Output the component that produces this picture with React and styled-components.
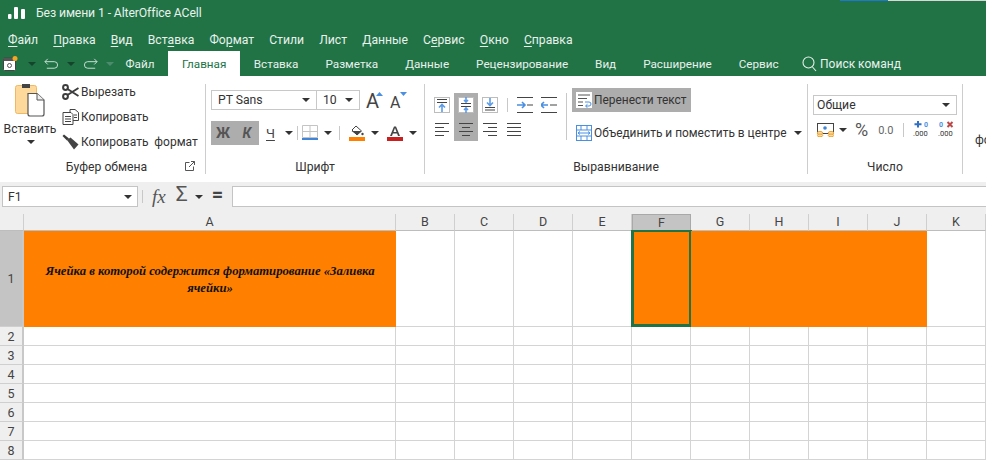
import React from "react";
import styled, { createGlobalStyle } from "styled-components";

const GlobalStyle = createGlobalStyle`
    html, body {
        margin: 0;
        padding: 0;
        background: #fff;
        overflow: hidden;
    }
    * { box-sizing: border-box; }
    svg { flex: none; }
    body {
        font-family: Roboto, "Noto Sans", sans-serif;
        color: #333;
    }
`;

const MENU = [
    ["", "Ф", "айл"], ["", "П", "равка"], ["", "В", "ид"], ["Вст", "а", "вка"], ["Фо", "р", "мат"],
    ["Стили", "", ""], ["Лист", "", ""], ["", "Д", "анные"], ["С", "е", "рвис"], ["", "О", "кно"], ["", "С", "правка"],
];
const TABS = ["Вставка", "Разметка", "Данные", "Рецензирование", "Вид", "Расширение", "Сервис"];
const COLUMNS = ["A", "B", "C", "D", "E", "F", "G", "H", "I", "J", "K"];
const FILLED = ["A", "F", "G", "H", "I", "J"];
const ROWS = [2, 3, 4, 5, 6, 7, 8];
const GRID_COLS = "24px 372px repeat(10, 59px)";

function Logo() {
    return (
        <svg width="18" height="12" viewBox="0 0 18 12" fill="#fff">
            <rect x="0" y="7" width="3.5" height="5" rx="1" />
            <rect x="6" y="0" width="4" height="12" rx="1" />
            <rect x="13" y="2" width="4" height="10" rx="1" />
        </svg>
    );
}

function SaveIcon() {
    return (
        <svg width="15" height="15" viewBox="0 0 15 15">
            <rect x="0.5" y="2" width="12" height="12.5" rx="1" fill="#fff" stroke="#444" />
            <rect x="0.5" y="2" width="12" height="3" fill="#555" />
            <circle cx="6.5" cy="9.5" r="2" fill="none" stroke="#555" />
            <circle cx="12" cy="2.5" r="2.5" fill="#f5a623" />
        </svg>
    );
}

function UndoIcon({ $flip }) {
    return (
        <svg width="15" height="12" viewBox="0 0 16 12" fill="none" stroke="#cfe3d8" strokeWidth="1"
            style={$flip ? { transform: "scaleX(-1)" } : undefined}>
            <path d="M1 3.5h10a3.5 3.5 0 0 1 0 7H3" />
            <path d="M4 0.5L1 3.5l3 3" />
        </svg>
    );
}

function SearchIcon() {
    return (
        <svg width="15" height="16" viewBox="0 0 15 16" fill="none" stroke="#e4efe9" strokeWidth="1.1">
            <circle cx="6.5" cy="6.5" r="5.5" />
            <path d="M10.5 11l3.5 4" />
        </svg>
    );
}

function PasteIcon() {
    return (
        <svg width="31" height="33" viewBox="0 0 31 33">
            <rect x="0.5" y="1.5" width="21" height="28" rx="2" fill="#fdd99b" stroke="#f0b860" />
            <rect x="7" y="0" width="8" height="4" fill="#444" />
            <path d="M13 9.5h9l7 6.5v14a2 2 0 0 1-2 2H15a2 2 0 0 1-2-2z" fill="#fff" stroke="#555" strokeWidth="1.2" />
            <path d="M22 9.5v6.5h7" fill="#eee" stroke="#555" />
        </svg>
    );
}

function ScissorsIcon() {
    return (
        <svg width="17" height="16" viewBox="0 0 17 16" fill="none" stroke="#3c3c3c" strokeWidth="2">
            <circle cx="3.5" cy="3.5" r="2.4" />
            <circle cx="3.5" cy="12.5" r="2.4" />
            <path d="M5.5 5l11 7M5.5 11l11-7" />
        </svg>
    );
}

function CopyIcon() {
    return (
        <svg width="17" height="16" viewBox="0 0 17 16" fill="#fff" stroke="#444" strokeWidth="1">
            <path d="M8 0.5h5l3.5 3v8H8z" />
            <path d="M1 3.5h8l2 2v10H1z" />
            <path d="M3 7.5h6M3 10h6M3 12.5h6" />
            <path d="M12 6h3M12 8.5h3" />
        </svg>
    );
}

function BrushIcon() {
    return (
        <svg width="17" height="16" viewBox="0 0 17 16">
            <path d="M0.5 2l1.5-1.5 5 4-2 2z" fill="#3c3c3c" />
            <path d="M5 6l3.5-2.5 8 7-4.5 5z" fill="#444" />
        </svg>
    );
}

function LauncherIcon() {
    return (
        <svg width="10" height="10" viewBox="0 0 10 10" fill="none" stroke="#555" strokeWidth="1">
            <path d="M4.5 1.5H.5v8h8v-4" />
            <path d="M4 6l5.5-5.5M6 .5h3.5V4" />
        </svg>
    );
}

function FontSizeIcon({ $down, $size }) {
    return (
        <svg width="20" height="24" viewBox="0 0 20 24">
            <text x="0" y="20" fontSize={$size} fontFamily="Roboto" fill="#444">A</text>
            <path d={$down ? "M10 4h7l-3.5 4z" : "M10 8h7l-3.5-4z"} fill="#4a8fe0" />
        </svg>
    );
}

function BordersIcon() {
    return (
        <svg width="16" height="16" viewBox="0 0 16 16" fill="none">
            <path d="M.5 .5h15v12H.5zM8 .5v12M.5 6.5h15" stroke="#c4c4c4" />
            <rect x="0" y="13" width="16" height="2" fill="#3f86d8" />
        </svg>
    );
}

function FillIcon() {
    return (
        <svg width="16" height="16" viewBox="0 0 16 16">
            <path d="M7 1l5.5 5-4.5 4-5-5z" fill="#fff" stroke="#444" />
            <path d="M2.5 6h10L8 10z" fill="#444" />
            <circle cx="13.5" cy="9" r="1.2" fill="#444" />
            <rect x="0" y="12" width="16" height="4" fill="#ff8000" />
        </svg>
    );
}

function ColorIcon() {
    return (
        <svg width="16" height="16" viewBox="0 0 16 16">
            <path d="M3 11L7 1.5h2L13 11h-2l-.9-2.5H5.9L5 11zM6.5 7h3L8 3z" fill="#444" />
            <rect x="0" y="12" width="16" height="4" fill="#c8201f" />
        </svg>
    );
}

function VAlignIcon({ $kind }) {
    const lines = { top: [2.5, 5.5], middle: [6.5, 9.5], bottom: [10.5, 13] }[$kind];
    return (
        <svg width="16" height="16" viewBox="0 0 16 16" fill="none">
            <rect x=".5" y=".5" width="15" height="15" fill="#fff" stroke="#bdbdbd" />
            {lines.map(y => <path key={y} d={`M3 ${y}h10`} stroke="#444" />)}
            {$kind === "top" && <path d="M8 15V8M5 10.5L8 7.5l3 3" stroke="#5b9bea" strokeWidth="1.6" />}
            {$kind === "middle" && <path d="M8 0v5M6 3l2 2 2-2M8 16v-5M6 13l2-2 2 2" stroke="#5b9bea" strokeWidth="1.6" />}
            {$kind === "bottom" && <path d="M8 1v7M5 5.5L8 8.5l3-3" stroke="#5b9bea" strokeWidth="1.6" />}
        </svg>
    );
}

function HAlignIcon({ $kind }) {
    const rows = {
        left: [[0, 14], [0, 9], [0, 14], [0, 9]],
        center: [[0, 14], [3, 8], [0, 14], [3, 8]],
        right: [[0, 14], [5, 9], [0, 14], [5, 9]],
        justify: [[0, 14], [0, 14], [0, 14], [0, 14]],
    }[$kind];
    return (
        <svg width="14" height="14" viewBox="0 0 14 14" stroke="#444">
            {rows.map(([x, w], i) => <path key={i} d={`M${x} ${1.5 + i * 4}h${w}`} />)}
        </svg>
    );
}

function IndentIcon({ $out }) {
    return (
        <svg width="16" height="16" viewBox="0 0 16 16" fill="none">
            <path d="M0 .5h16M0 15.5h16" stroke="#444" />
            {$out
                ? <><path d="M0 8h7M3 5L0 8l3 3" stroke="#4a8fe0" strokeWidth="1.6" /><path d="M9 8h7" stroke="#444" /></>
                : <><path d="M0 8h7M5 5l3 3-3 3" stroke="#4a8fe0" strokeWidth="1.6" /><path d="M10 8h6" stroke="#444" /></>}
        </svg>
    );
}

function WrapIcon() {
    return (
        <svg width="16" height="16" viewBox="0 0 16 16" fill="none">
            <rect width="16" height="16" fill="#fff" />
            <path d="M2 3h12M2 6.5h9M2 10h5M2 13.5h5" stroke="#555" />
            <path d="M9 10h4a1.7 1.7 0 0 1 0 4h-3M11.5 12.2L9.5 14l2 1.8" stroke="#4a8fe0" />
        </svg>
    );
}

function MergeIcon() {
    return (
        <svg width="16" height="16" viewBox="0 0 16 16" fill="none" stroke="#4a8fe0">
            <rect x=".5" y=".5" width="15" height="15" fill="#fff" />
            <path d="M.5 5h15M.5 11h15M5 .5V5M11 .5V5M5 11v4.5M11 11v4.5" />
            <path d="M2 8h12M4 6.5L2 8l2 1.5M12 6.5L14 8l-2 1.5" />
        </svg>
    );
}

function CurrencyIcon() {
    return (
        <svg width="17" height="14" viewBox="0 0 17 14" fill="none">
            <rect x=".5" y=".5" width="16" height="10" stroke="#444" fill="#fff" />
            <circle cx="8" cy="5" r="1.8" fill="#3f86d8" />
            <ellipse cx="3" cy="10" rx="2.8" ry="1.6" fill="#fdd99b" stroke="#e8a53a" />
            <ellipse cx="3" cy="12.4" rx="2.8" ry="1.4" fill="#fdd99b" stroke="#e8a53a" />
            <ellipse cx="14" cy="10" rx="2.8" ry="1.6" fill="#fdd99b" stroke="#e8a53a" />
            <ellipse cx="14" cy="12.4" rx="2.8" ry="1.4" fill="#fdd99b" stroke="#e8a53a" />
        </svg>
    );
}

function DecimalIcon({ $remove }) {
    return (
        <svg width="17" height="18" viewBox="0 0 17 18">
            {$remove
                ? <>
                    <text x="1" y="6" fontSize="7" fontWeight="700" fontFamily="Roboto" fill="#4a8fe0">0</text>
                    <path d="M9.5 1l5 5M14.5 1l-5 5" stroke="#b84a4a" strokeWidth="2" />
                </>
                : <>
                    <path d="M5 0v6.5M1.5 3.2h7" stroke="#2f6fc4" strokeWidth="2" />
                    <text x="11" y="6" fontSize="7" fontWeight="700" fontFamily="Roboto" fill="#4a8fe0">0</text>
                </>}
            <text x="0" y="15" fontSize="7.5" fontFamily="Roboto" fill="#333">.000</text>
        </svg>
    );
}

const Window = styled.div`
    position: relative;
    width: 986px;
    height: 460px;
    overflow: hidden;
    background: #fff;
`;

const ProgressLine = styled.div`
    position: absolute;
    top: 0;
    left: 840px;
    width: 146px;
    height: 1px;
    background: linear-gradient(to right, #1e78d2 48px, #d8d8d8 48px);
`;

const Header = styled.header`
    background: #217346;
    color: #e8f1ec;
`;

const TitleRow = styled.div`
    height: 28px;
    display: flex;
    align-items: center;
    gap: 10px;
    padding: 0 0 2px 8px;
    font-size: 12.2px;
    letter-spacing: -0.1px;
`;

const MenuRow = styled.nav`
    height: 23px;
    display: flex;
    align-items: center;
    gap: 15.1px;
    padding-left: 8px;
    font-size: 12.2px;
`;

const MenuItem = styled.span`
    u { text-underline-offset: 2px; }
`;

const TabRow = styled.div`
    height: 25px;
    display: flex;
    align-items: center;
    padding-left: 3px;
`;

const QuickTool = styled.div`
    display: flex;
    align-items: center;
    gap: 8px;
    width: 109px;
`;

const Caret = styled.span`
    flex: none;
    width: 0;
    height: 0;
    border-left: 4px solid transparent;
    border-right: 4px solid transparent;
    border-top: 4px solid ${p => p.$color || "#333"};
    margin-left: ${p => p.$ml || 0}px;
`;

const Tab = styled.div`
    height: 25px;
    line-height: 26px;
    padding: 0 ${p => (p.$active ? 14 : 13.5)}px;
    font-size: 11.7px;
    color: ${p => (p.$active ? "#217346" : "#e8f1ec")};
    background: ${p => (p.$active ? "#fff" : "transparent")};
`;

const SearchBox = styled.div`
    display: flex;
    align-items: center;
    gap: 3px;
    margin-left: 10px;
    font-size: 12px;
`;

const Ribbon = styled.section`
    height: 106px;
    padding-top: 8px;
    display: flex;
    overflow: hidden;
`;

const Group = styled.div`
    flex: none;
    width: ${p => p.$width}px;
    height: 90px;
    display: flex;
    flex-direction: column;
    border-right: ${p => (p.$last ? "none" : "1px solid #cdcdcd")};
`;

const GroupBody = styled.div`
    flex: 1;
    min-height: 0;
    display: flex;
    padding-left: ${p => p.$pl || 0}px;
`;

const GroupLabel = styled.div`
    height: 17px;
    line-height: 20px;
    position: relative;
    text-align: center;
    font-size: 12.2px;
    padding-left: ${p => p.$pl || 0}px;
`;

const Launcher = styled.span`
    position: absolute;
    top: 4px;
    left: 185px;
    line-height: 0;
`;

const PasteButton = styled.div`
    flex: none;
    width: 60px;
    display: flex;
    flex-direction: column;
    align-items: center;
    font-size: 12.2px;
    gap: 2px;
`;

const PasteLabel = styled.span`
    line-height: 18px;
    margin-top: 1px;
`;

const ActionList = styled.div`
    display: flex;
    flex-direction: column;
    gap: 9px;
    padding-left: 2px;
`;

const Action = styled.div`
    height: 16px;
    display: flex;
    align-items: center;
    gap: 2px;
    font-size: 12px;
    white-space: pre;
`;

const Stack = styled.div`
    display: flex;
    flex-direction: column;
    padding-top: ${p => p.$pt || 0}px;
    gap: ${p => p.$gap || 0}px;
`;

const ToolRow = styled.div`
    display: flex;
    align-items: center;
    height: ${p => p.$height || 24}px;
`;

const Select = styled.div`
    width: ${p => p.$width}px;
    height: ${p => p.$height || 20}px;
    margin-left: ${p => p.$ml || 0}px;
    display: flex;
    align-items: center;
    justify-content: space-between;
    padding: 0 ${p => p.$pr || 6}px 0 ${p => p.$pl || 6}px;
    border: 1px solid #c8c8c8;
    background: #fff;
    font-size: 12.2px;
    flex: none;
`;

const Spacer = styled.span`
    flex: none;
    display: inline-flex;
    margin-left: ${p => p.$ml || 0}px;
    line-height: 0;
`;

const StyleGroup = styled.div`
    display: flex;
    background: #adadad;
    height: 24px;
`;

const StyleLetter = styled.span`
    width: 24px;
    height: 24px;
    display: flex;
    align-items: center;
    justify-content: center;
    font-size: 14px;
    font-weight: 700;
    font-style: ${p => (p.$italic ? "italic" : "normal")};
    color: #555;
`;

const UnderlineLetter = styled.span`
    margin-left: 7px;
    font-size: 13px;
    text-decoration: underline;
    text-underline-offset: 2px;
    color: #444;
`;

const Divider = styled.span`
    flex: none;
    width: 1px;
    height: ${p => p.$height || 14}px;
    margin-left: ${p => p.$ml || 0}px;
    margin-top: ${p => p.$mt || 0}px;
    background: #c8c8c8;
`;

const AlignPanel = styled.div`
    display: flex;
    flex-direction: column;
    padding-top: 9px;
    margin-left: 5px;
`;

const AlignRow = styled.div`
    display: flex;
    align-items: center;
    height: 24px;
`;

const AlignCell = styled.div`
    width: 24px;
    height: 24px;
    flex: none;
    display: flex;
    align-items: center;
    justify-content: center;
    margin-left: ${p => p.$ml || 0}px;
    background: ${p => (p.$on ? "#adadad" : "transparent")};
`;

const WrapList = styled.div`
    display: flex;
    flex-direction: column;
    padding-top: 4px;
    margin-left: 5px;
`;

const WrapButton = styled.div`
    width: ${p => p.$width}px;
    height: 24px;
    display: flex;
    align-items: center;
    gap: 2px;
    padding-left: 4px;
    background: ${p => (p.$on ? "#adadad" : "transparent")};
    font-size: 11.9px;
    white-space: nowrap;
    margin-top: ${p => p.$mt || 0}px;
`;

const ZeroText = styled.span`
    font-size: 11px;
    line-height: 1;
    color: #666;
`;

const Percent = styled.span`
    font-size: 18px;
    color: #555;
    line-height: 1;
`;

const Overflowing = styled.div`
    font-size: 12.2px;
    padding: 49px 0 0 12px;
    white-space: nowrap;
`;

const FormulaBar = styled.div`
    height: 32px;
    padding: 4px 0 0 2px;
    background: #efefef;
    display: flex;
    align-items: flex-start;
`;

const NameBox = styled.div`
    width: 136px;
    height: 21px;
    flex: none;
    display: flex;
    align-items: center;
    justify-content: space-between;
    padding: 0 5px;
    background: #fff;
    border: 1px solid #c4c4c4;
    font-size: 12.2px;
`;

const FormulaIcons = styled.div`
    width: 94px;
    height: 21px;
    flex: none;
    display: flex;
    align-items: center;
    color: #555;
`;

const FxText = styled.span`
    margin-left: 9px;
    font-family: "Liberation Serif", serif;
    font-style: italic;
    font-size: 19px;
`;

const SumText = styled.span`
    margin-left: 10px;
    font-size: 21px;
    line-height: 1;
    margin-top: -5px;
`;

const EqualsText = styled.span`
    margin-left: 9px;
    font-size: 20px;
    font-weight: 700;
    color: #444;
    line-height: 1;
    margin-top: -5px;
`;

const FormulaInput = styled.div`
    flex: 1;
    height: 21px;
    background: #fff;
    border: 1px solid #c4c4c4;
    border-right: none;
`;

const Sheet = styled.div`
    display: grid;
    grid-template-columns: ${GRID_COLS};
    grid-template-rows: 17px 96px repeat(7, 19px);
`;

const ColHead = styled.div`
    background: ${p => (p.$active ? "#c4c4c4" : "#efefef")};
    border-right: 1px solid ${p => (p.$active ? "#a9a9a9" : "#cfcfcf")};
    border-left: ${p => (p.$active ? "1px solid #a9a9a9" : "none")};
    border-top: ${p => (p.$active ? "1px solid #a9a9a9" : "none")};
    border-bottom: 1px solid #bdbdbd;
    text-align: center;
    font-size: 12.5px;
    line-height: 16px;
    color: #444;
`;

const RowHead = styled.div`
    background: ${p => (p.$active ? "#c4c4c4" : "#efefef")};
    border-right: 2px solid #c8c8c8;
    border-bottom: 1px solid #cfcfcf;
    display: flex;
    align-items: center;
    justify-content: center;
    font-size: 12.5px;
    color: #444;
`;

const Cell = styled.div`
    position: relative;
    background: ${p => (p.$filled ? "#ff8000" : "#fff")};
    border-right: ${p => (p.$filled ? "none" : "1px solid #d4d4d4")};
    border-bottom: ${p => (p.$filled ? "none" : "1px solid #d4d4d4")};
`;

const FilledText = styled(Cell)`
    display: flex;
    align-items: center;
    justify-content: center;
    padding: 1px 8px 0;
    text-align: center;
    font-family: "Liberation Serif", serif;
    font-size: 12.7px;
    line-height: 17px;
    font-weight: 700;
    font-style: italic;
    color: #111;
`;

const Selection = styled.div`
    position: absolute;
    inset: -1px -1px 0 -1px;
    border: 3px solid #217346;
    border-top-width: 2px;
`;

const Handle = styled.span`
    position: absolute;
    right: -5px;
    bottom: -5px;
    width: 5px;
    height: 5px;
    background: #217346;
`;

export default function App() {
    return (
        <Window>
            <GlobalStyle />
            <ProgressLine />
            <Header>
                <TitleRow>
                    <Logo />
                    <span>Без имени 1 - AlterOffice ACell</span>
                </TitleRow>
                <MenuRow>
                    {MENU.map(([before, key, after]) => (
                        <MenuItem key={before + key + after}>{before}{key && <u>{key}</u>}{after}</MenuItem>
                    ))}
                </MenuRow>
                <TabRow>
                    <QuickTool>
                        <SaveIcon />
                        <Caret $color="#12452a" $ml={2} />
                        <UndoIcon />
                        <Caret $color="#12452a" />
                        <UndoIcon $flip />
                        <Caret $color="#4d8c6b" />
                    </QuickTool>
                    <Tab>Файл</Tab>
                    <Tab $active>Главная</Tab>
                    {TABS.map(t => <Tab key={t}>{t}</Tab>)}
                    <SearchBox>
                        <SearchIcon />
                        <span>Поиск команд</span>
                    </SearchBox>
                </TabRow>
            </Header>

            <Ribbon>
                <Group $width={206}>
                    <GroupBody>
                        <PasteButton>
                            <PasteIcon />
                            <PasteLabel>Вставить</PasteLabel>
                            <Caret $ml={1} />
                        </PasteButton>
                        <ActionList>
                            <Action><ScissorsIcon />Вырезать</Action>
                            <Action><CopyIcon />Копировать</Action>
                            <Action><BrushIcon />Копировать  формат</Action>
                        </ActionList>
                    </GroupBody>
                    <GroupLabel $pl={8}>
                        Буфер обмена
                        <Launcher><LauncherIcon /></Launcher>
                    </GroupLabel>
                </Group>

                <Group $width={219}>
                    <GroupBody $pl={5}>
                        <Stack $pt={6} $gap={11}>
                            <ToolRow $height={20}>
                                <Select $width={106}>PT Sans<Caret /></Select>
                                <Select $width={44} $ml={-1}>10<Caret /></Select>
                                <Spacer $ml={6}><FontSizeIcon $size={20} /></Spacer>
                                <Spacer $ml={4}><FontSizeIcon $size={16} $down /></Spacer>
                            </ToolRow>
                            <ToolRow>
                                <StyleGroup>
                                    <StyleLetter>Ж</StyleLetter>
                                    <StyleLetter $italic>К</StyleLetter>
                                </StyleGroup>
                                <UnderlineLetter>Ч</UnderlineLetter>
                                <Caret $ml={10} />
                                <Divider $ml={4} />
                                <Spacer $ml={4}><BordersIcon /></Spacer>
                                <Caret $ml={6} />
                                <Divider $ml={7} />
                                <Spacer $ml={9}><FillIcon /></Spacer>
                                <Caret $ml={6} />
                                <Spacer $ml={8}><ColorIcon /></Spacer>
                                <Caret $ml={6} />
                            </ToolRow>
                        </Stack>
                    </GroupBody>
                    <GroupLabel>Шрифт</GroupLabel>
                </Group>

                <Group $width={383}>
                    <GroupBody>
                        <AlignPanel>
                            <AlignRow>
                                <AlignCell><VAlignIcon $kind="top" /></AlignCell>
                                <AlignCell $on><VAlignIcon $kind="middle" /></AlignCell>
                                <AlignCell><VAlignIcon $kind="bottom" /></AlignCell>
                                <Divider $ml={5} />
                                <AlignCell $ml={5}><IndentIcon /></AlignCell>
                                <AlignCell><IndentIcon $out /></AlignCell>
                            </AlignRow>
                            <AlignRow>
                                <AlignCell><HAlignIcon $kind="left" /></AlignCell>
                                <AlignCell $on><HAlignIcon $kind="center" /></AlignCell>
                                <AlignCell><HAlignIcon $kind="right" /></AlignCell>
                                <AlignCell><HAlignIcon $kind="justify" /></AlignCell>
                            </AlignRow>
                        </AlignPanel>
                        <Divider $height={47} $ml={5} $mt={9} />
                        <WrapList>
                            <WrapButton $on $width={119}><WrapIcon />Перенести текст</WrapButton>
                            <WrapButton $mt={9} $width={232}>
                                <MergeIcon />Объединить и поместить в центре<Caret $ml={5} />
                            </WrapButton>
                        </WrapList>
                    </GroupBody>
                    <GroupLabel>Выравнивание</GroupLabel>
                </Group>

                <Group $width={155}>
                    <GroupBody $pl={5}>
                        <Stack $pt={11} $gap={3}>
                            <ToolRow $height={20}>
                                <Select $width={144} $pl={3}>Общие<Caret /></Select>
                            </ToolRow>
                            <ToolRow>
                                <Spacer $ml={4}><CurrencyIcon /></Spacer>
                                <Caret $ml={5} />
                                <Spacer $ml={8}><Percent>%</Percent></Spacer>
                                <Spacer $ml={10}><ZeroText>0.0</ZeroText></Spacer>
                                <Divider $ml={10} />
                                <Spacer $ml={9}><DecimalIcon /></Spacer>
                                <Spacer $ml={8}><DecimalIcon $remove /></Spacer>
                            </ToolRow>
                        </Stack>
                    </GroupBody>
                    <GroupLabel>Число</GroupLabel>
                </Group>

                <Group $width={23} $last>
                    <Overflowing>фо</Overflowing>
                </Group>
            </Ribbon>

            <FormulaBar>
                <NameBox>F1<Caret /></NameBox>
                <FormulaIcons>
                    <Divider $ml={4} $height={13} />
                    <FxText>fx</FxText>
                    <SumText>Σ</SumText>
                    <Caret $ml={7} />
                    <EqualsText>=</EqualsText>
                </FormulaIcons>
                <FormulaInput />
            </FormulaBar>

            <Sheet>
                <ColHead />
                {COLUMNS.map(c => <ColHead key={c} $active={c === "F"}>{c}</ColHead>)}

                <RowHead $active>1</RowHead>
                {COLUMNS.map(c => {
                    if (c === "A") {
                        return <FilledText key={c} $filled>Ячейка в которой содержится форматирование «Заливка ячейки»</FilledText>;
                    }
                    return (
                        <Cell key={c} $filled={FILLED.includes(c)}>
                            {c === "F" && <Selection><Handle /></Selection>}
                        </Cell>
                    );
                })}

                {ROWS.map(r => (
                    <React.Fragment key={r}>
                        <RowHead>{r}</RowHead>
                        {COLUMNS.map(c => <Cell key={c} />)}
                    </React.Fragment>
                ))}
            </Sheet>
        </Window>
    );
}
